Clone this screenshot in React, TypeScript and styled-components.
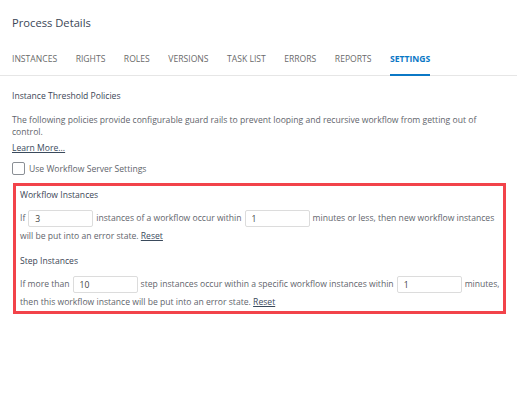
import React from "react";
import styled, { createGlobalStyle } from "styled-components";

const GlobalStyle = createGlobalStyle`
  body {
    margin: 0;
    background: #ffffff;
    font-family: "Open Sans", "Liberation Sans", sans-serif;
  }
`;

const Page = styled.div`
  width: 517px;
  height: 395px;
  background: #ffffff;
  overflow: hidden;
`;

const Title = styled.h1`
  margin: 0;
  padding: 15px 12px 0 12px;
  font-size: 11.2px;
  font-weight: 400;
  color: #3b4656;
  height: 22px;
  line-height: 16px;
`;

const TabBar = styled.div`
  display: flex;
  gap: 18.5px;
  padding: 0 12px;
  margin-top: 16px;
  border-bottom: 1px solid #e6e6e6;
`;

const Tab = styled.div<{ $active?: boolean }>`
  font-size: 8.6px;
  text-transform: uppercase;
  color: ${(p) => (p.$active ? "#0b78c6" : "#6a6a6a")};
  font-weight: ${(p) => (p.$active ? 700 : 400)};
  padding-bottom: 9px;
  border-bottom: 2px solid ${(p) => (p.$active ? "#0b78c6" : "transparent")};
  margin-bottom: -1px;
`;

const Section = styled.div`
  padding: 14px 12px 0 12px;
  color: #555b63;
  font-size: 8.6px;
`;

const SectionTitle = styled.div`
  color: #3b4656;
  margin-bottom: 12px;
`;

const Paragraph = styled.p<{ $gap?: number }>`
  margin: ${(p) => p.$gap ?? 0}px 0 0 0;
  line-height: 12px;
  color: #5f656c;
  width: 480px;
`;

const Link = styled.a`
  color: #3a4a5c;
  text-decoration: underline;
  cursor: pointer;
`;

const CheckRow = styled.label`
  display: flex;
  align-items: center;
  gap: 4px;
  margin-top: 8px;
  color: #5f656c;
`;

const Box = styled.span`
  box-sizing: border-box;
  width: 13px;
  height: 13px;
  border: 1px solid #8a8f95;
  border-radius: 2px;
  background: #fff;
`;

const Policies = styled.div`
  margin: 8px 11px 0 13px;
  border: 3px solid #f2434a;
  padding: 3px 0 0 4px;
  color: #5f656c;
  font-size: 8.6px;
`;

const PolicyTitle = styled.div`
  color: #3b4656;
  margin: 0 0 7px 0;
  line-height: 13px;
`;

const PolicyText = styled.div`
  line-height: 18px;
  margin-bottom: 10px;
  &:last-child {
    margin-bottom: 0;
  }
`;

const Field = styled.input`
  display: inline-block;
  box-sizing: border-box;
  width: 65px;
  height: 17px;
  border: 1px solid #dcdcdc;
  border-radius: 2px;
  padding: 0 6px;
  vertical-align: middle;
  margin: 0 3px;
  color: #444;
  font-family: inherit;
  font-size: 8.6px;
  outline: none;
  background: #fff;
`;

const App: React.FC = () => {
  const tabs = [
    "Instances",
    "Rights",
    "Roles",
    "Versions",
    "Task List",
    "Errors",
    "Reports",
    "Settings",
  ];
  return (
    <Page>
      <GlobalStyle />
      <Title>Process Details</Title>
      <TabBar>
        {tabs.map((t) => (
          <Tab key={t} $active={t === "Settings"}>
            {t}
          </Tab>
        ))}
      </TabBar>
      <Section>
        <SectionTitle>Instance Threshold Policies</SectionTitle>
        <Paragraph>
          The following policies provide configurable guard rails to prevent
          looping and recursive workflow from getting out of control.
        </Paragraph>
        <Paragraph $gap={4}>
          <Link>Learn More...</Link>
        </Paragraph>
        <CheckRow>
          <Box />
          Use Workflow Server Settings
        </CheckRow>
      </Section>
      <Policies>
        <PolicyTitle>Workflow Instances</PolicyTitle>
        <PolicyText>
          If<Field defaultValue="3" />instances of a workflow occur within
          <Field defaultValue="1" />minutes or less, then new workflow
          instances will be put into an error state. <Link>Reset</Link>
        </PolicyText>
        <PolicyTitle>Step Instances</PolicyTitle>
        <PolicyText>
          If more than<Field defaultValue="10" />step instances occur within a
          specific workflow instances within<Field defaultValue="1" />minutes,
          then this workflow instance will be put into an error state.{" "}
          <Link>Reset</Link>
        </PolicyText>
      </Policies>
    </Page>
  );
};

export default App;
